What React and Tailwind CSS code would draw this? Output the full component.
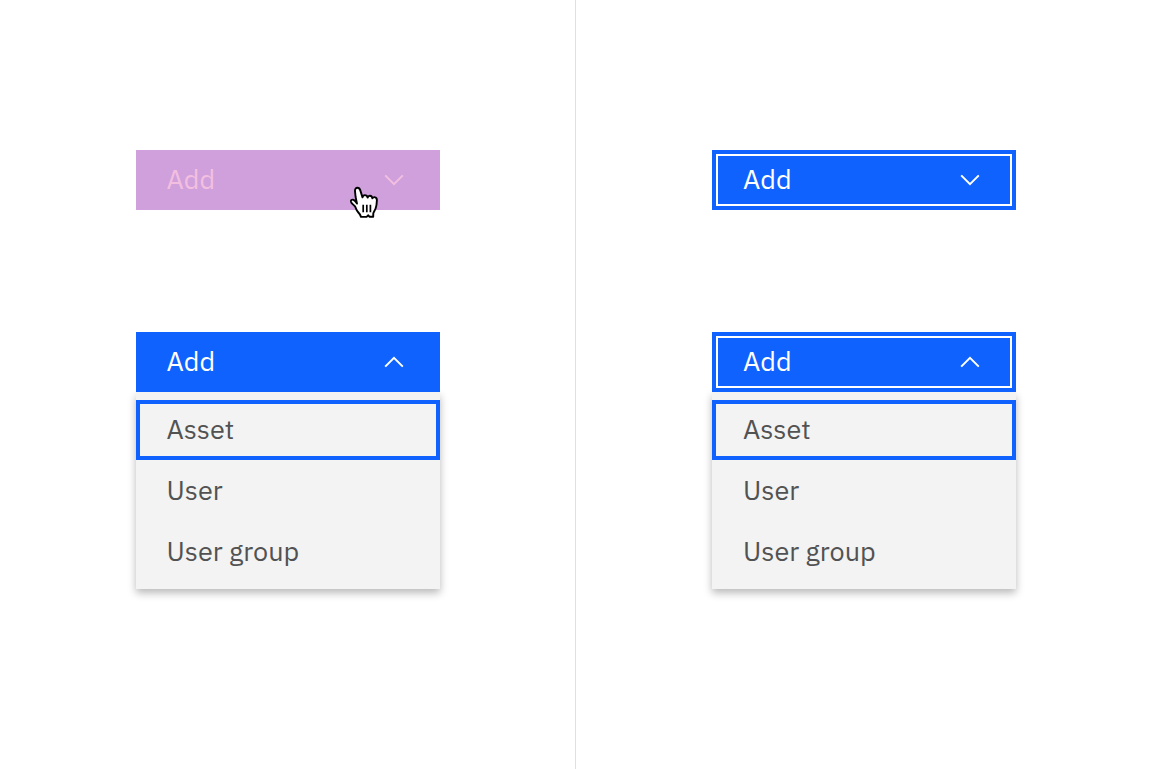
import React from "react";

function Chevron({ up }) {
  return (
    <svg
      viewBox="0 0 20 12"
      className="h-3 w-5 shrink-0"
      fill="none"
      stroke="currentColor"
      strokeWidth="2"
      aria-hidden="true"
    >
      <path d={up ? "M1.2 10.6 10 1.8l8.8 8.8" : "M1.2 1.4 10 10.2l8.8-8.8"} />
    </svg>
  );
}

function HandPointer() {
  return (
    <svg
      viewBox="0 0 30 34"
      className="pointer-events-none absolute top-9 left-[213px] h-[34px] w-[30px]"
      fill="none"
      aria-hidden="true"
    >
      <path
        d="M8 17.6 6.6 11 6 5.2C5.8 3.2 6.8 1.8 8.4 1.8c1.5 0 2.4 1 2.9 2.6l2.2 7c.3-1.6 1.2-2.3 2.4-2.3 1.5 0 2.4.9 2.7 2.5.5-1.5 1.3-2 2.4-1.9 1.4.1 2.2 1 2.4 2.6.5-.9 1.2-1.3 2.1-1.2 1.600.2 2.500 1.300 2.400 3.100-.1 3.200-.5 6-1.300 8.300-.6 1.700-1.800 3.200-2.300 4.700l-.1 3.600h-3.800l-1.100-1.600-1.700 1.700h-5.600c-.7-2.300-1.800-3.700-3.400-5.400-1.200-1.400-1.600-3.200-2.400-4.800C4.900 19 2.500 17.600 2 15.700c-.3-1.400.8-2.300 2.200-2 1.600.3 2.700 2.100 3.800 3.900Z"
        fill="white"
        stroke="black"
        strokeWidth="1.9"
        strokeLinejoin="round"
      />
      <path
        d="M14.2 18.8v7.400M17.800 18.800v7.400M21.400 18.800v7.400"
        stroke="black"
        strokeWidth="1.7"
      />
    </svg>
  );
}

function MenuButton({ open = false, focused = false, hovered = false }) {
  return (
    <div className="relative">
      <button
        type="button"
        aria-haspopup="menu"
        aria-expanded={open}
        className={
          "block h-[60px] w-full p-1 text-left " +
          (hovered ? "bg-[#cfa0dc] text-[#f3bfe0]" : "bg-[#0f62fe] text-white")
        }
      >
        <span
          className={
            "flex h-full items-center justify-between border-2 pr-[30px] pl-[25px] " +
            (focused ? "border-white" : "border-transparent")
          }
        >
          <span className="pb-0.5">Add</span>
          <Chevron up={open} />
        </span>
      </button>
      {hovered && <HandPointer />}
    </div>
  );
}

const items = ["Asset", "User", "User group"];

function Menu() {
  return (
    <div
      role="menu"
      aria-label="Add"
      className="flex flex-col gap-px bg-[#f3f3f3] pt-2 pb-[7px] text-[#525252] shadow-[0_4px_8px_rgba(0,0,0,0.28)]"
    >
      {items.map((item, i) => (
        <button
          key={item}
          type="button"
          role="menuitem"
          className={
            "h-[60px] w-full border-4 px-[27px] pb-0.5 text-left " +
            (i === 0 ? "border-[#0f62fe]" : "border-transparent")
          }
        >
          {item}
        </button>
      ))}
    </div>
  );
}

function Column({ hovered, focused, divider }) {
  return (
    <section
      className={
        "flex justify-center pt-[150px] pb-16 " +
        (divider ? "border-r border-[#e0e0e0]" : "")
      }
    >
      <div className="flex w-[304px] flex-col gap-[122px]">
        <MenuButton hovered={hovered} focused={focused} />
        <div>
          <div className="relative z-10">
            <MenuButton open focused={focused} />
          </div>
          <Menu />
        </div>
      </div>
    </section>
  );
}

export default function App() {
  return (
    <main className="grid min-h-screen grid-cols-2 bg-white font-['IBM_Plex_Sans',Roboto,sans-serif] text-[27px] leading-8">
      <Column hovered divider />
      <Column focused />
    </main>
  );
}
